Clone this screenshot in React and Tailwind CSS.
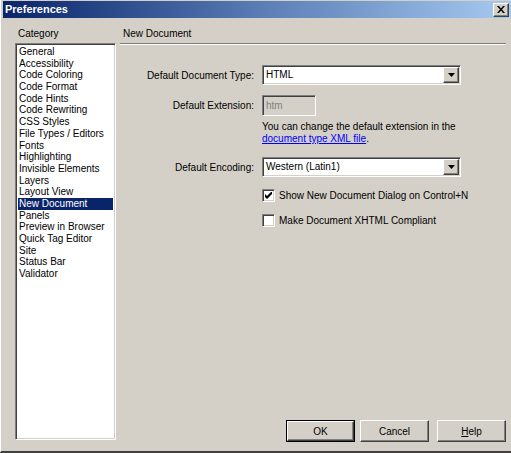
import { useState } from "react";

const categories = [
  "General",
  "Accessibility",
  "Code Coloring",
  "Code Format",
  "Code Hints",
  "Code Rewriting",
  "CSS Styles",
  "File Types / Editors",
  "Fonts",
  "Highlighting",
  "Invisible Elements",
  "Layers",
  "Layout View",
  "New Document",
  "Panels",
  "Preview in Browser",
  "Quick Tag Editor",
  "Site",
  "Status Bar",
  "Validator",
];

const sunken =
  "border border-t-[#808080] border-l-[#808080] border-b-white border-r-white shadow-[inset_1px_1px_0_#404040,inset_-1px_-1px_0_#d4d0c8]";
const raised =
  "border border-t-white border-l-white border-b-[#404040] border-r-[#404040] shadow-[inset_-1px_-1px_0_#808080]";

function DownArrow() {
  return (
    <svg width="7" height="4" viewBox="0 0 7 4">
      <path d="M0 0h7L3.5 4z" fill="#000" />
    </svg>
  );
}

function Select({ value }) {
  return (
    <div className={`flex h-[20px] w-[199px] items-center bg-white ${sunken}`}>
      <span className="flex-1 pl-[3px] leading-none">{value}</span>
      <div className={`mr-[1px] flex h-[16px] w-[16px] items-center justify-center bg-[#d4d0c8] ${raised}`}>
        <DownArrow />
      </div>
    </div>
  );
}

function Checkbox({ checked, label }) {
  return (
    <label className="flex h-[13px] items-center gap-[4px] leading-[13px]">
      <span className={`flex h-[13px] w-[13px] items-center justify-center bg-white ${sunken}`}>
        {checked ? (
          <svg width="7" height="7" viewBox="0 0 7 7">
            <path d="M0 2v3l2 2 5-5V-1L2 4z" fill="#000" />
          </svg>
        ) : null}
      </span>
      <span>{label}</span>
    </label>
  );
}

function Button({ children, primary }) {
  const inner = (
    <div className={`flex h-full w-full items-center justify-center bg-[#d4d0c8] ${raised}`}>{children}</div>
  );
  return primary ? (
    <div className="h-[22px] w-[69px] border border-black">{inner}</div>
  ) : (
    <div className="h-[22px] w-[69px]">{inner}</div>
  );
}

export default function App() {
  const [selected] = useState("New Document");

  return (
    <div
      className="flex h-[453px] w-[511px] flex-col overflow-hidden border-b-2 border-b-[#404040] border-l border-l-white bg-[#d4d0c8] pl-[2px] pt-[1px] text-[10px] text-black"
      style={{ fontFamily: '"Liberation Sans", Arial, sans-serif' }}
    >
      {/* title bar */}
      <div className="flex h-[17px] items-center bg-gradient-to-r from-[#0a246a] via-[#5a7cb4] to-[#a6caf0] pl-[2px] pr-[2px]">
        <span className="flex-1 text-[11px] font-bold text-white">Preferences</span>
        <div className={`flex h-[14px] w-[16px] items-center justify-center bg-[#d4d0c8] ${raised}`}>
          <svg width="8" height="7" viewBox="0 0 8 7">
            <path d="M0 0h2l2 2.5L6 0h2L5 3.5 8 7H6L4 4.5 2 7H0l3-3.5z" fill="#000" />
          </svg>
        </div>
      </div>

      <div className="flex flex-1">
        {/* category list */}
        <div className="flex w-[106px] flex-col pl-[12px] pt-[9px]">
          <span className="pl-[3px] leading-[14px]">Category</span>
          <div className={`mt-[2px] h-[397px] w-[101px] bg-white p-[2px] ${sunken}`}>
            {categories.map((name) => (
              <div
                key={name}
                className={`h-[11.7px] pl-[1px] leading-[11.7px] whitespace-nowrap ${
                  name === selected ? "bg-[#0a246a] text-white" : ""
                }`}
              >
                {name}
              </div>
            ))}
          </div>
        </div>

        {/* settings panel */}
        <div className="flex flex-1 flex-col pl-[11px] pr-[5px] pt-[9px]">
          <span className="pl-[3px] leading-[14px]">New Document</span>
          <div className="mt-[2px] h-[2px] border-t border-t-[#808080] border-b border-b-white" />

          <div className="mt-[20px] flex flex-col">
            <div className="flex items-center">
              <span className="w-[134px] text-right">Default Document Type:</span>
              <div className="ml-[8px]">
                <Select value="HTML" />
              </div>
            </div>

            <div className="mt-[10px] flex items-center">
              <span className="w-[134px] text-right">Default Extension:</span>
              <div className={`ml-[8px] flex h-[21px] w-[54px] items-center bg-[#d4d0c8] pl-[3px] text-[#808080] ${sunken}`}>
                htm
              </div>
            </div>

            <div className="ml-[142px] mt-[5px] leading-[12px]">
              <div>You can change the default extension in the</div>
              <div>
                <a href="#" className="text-[#0000ff] underline">
                  document type XML file
                </a>
                .
              </div>
            </div>

            <div className="mt-[12px] flex items-center">
              <span className="w-[134px] text-right">Default Encoding:</span>
              <div className="ml-[8px]">
                <Select value="Western (Latin1)" />
              </div>
            </div>

            <div className="ml-[142px] mt-[12px] flex flex-col gap-[12px]">
              <Checkbox checked label="Show New Document Dialog on Control+N" />
              <Checkbox label="Make Document XHTML Compliant" />
            </div>
          </div>

          <div className="mt-auto mb-[9px] flex justify-end">
            <Button primary>OK</Button>
            <div className="ml-[5px]">
              <Button>Cancel</Button>
            </div>
            <div className="ml-[8px]">
              <Button>
                <span>
                  <span className="underline">H</span>elp
                </span>
              </Button>
            </div>
          </div>
        </div>
      </div>
    </div>
  );
}
